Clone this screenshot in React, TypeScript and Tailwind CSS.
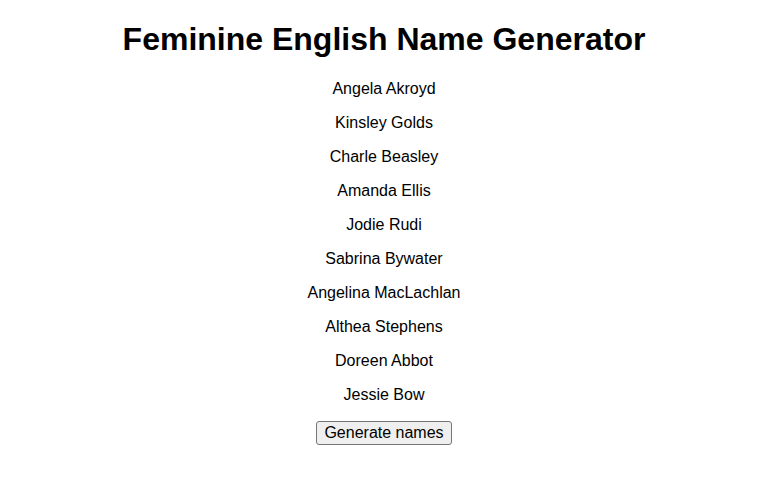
const names = [
  'Angela Akroyd',
  'Kinsley Golds',
  'Charle Beasley',
  'Amanda Ellis',
  'Jodie Rudi',
  'Sabrina Bywater',
  'Angelina MacLachlan',
  'Althea Stephens',
  'Doreen Abbot',
  'Jessie Bow',
];

export default function App() {
  return (
    <div className="min-h-[480px] bg-white text-black text-center font-['Liberation_Sans',Arial,sans-serif]">
      <h1 className="pt-[21px] text-[32px] leading-[37px] font-bold">Feminine English Name Generator</h1>
      <div className="mt-[22px] flex flex-col items-center gap-[16px]">
        {names.map((name) => (
          <p key={name} className="text-[16px] leading-[18px]">
            {name}
          </p>
        ))}
      </div>
      <button className="mt-[17px] h-[24px] px-[7px] text-[16px] leading-[18px] bg-[#efefef] border border-[#767676] rounded-[3px]">
        Generate names
      </button>
    </div>
  );
}
